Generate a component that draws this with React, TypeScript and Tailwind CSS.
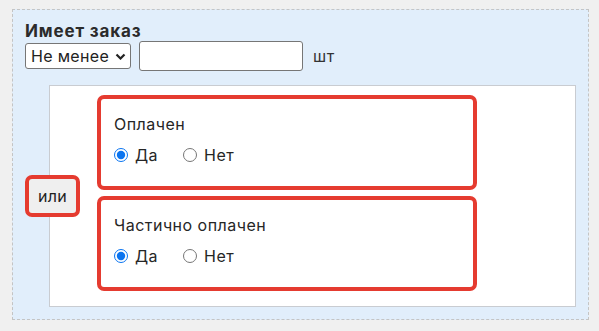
import { useState } from "react";

// Фильтр "Имеет заказ" с условиями оплаты
function OplataBlok({ nazvanie, imya }: { nazvanie: string; imya: string }) {
  const [znachenie, setZnachenie] = useState("da");
  return (
    <div className="w-[380px] rounded-[7px] border-4 border-[#e53b30] pl-[13px] pt-[15px] pb-[21px] text-[16px] leading-[20px] tracking-[0.03em] text-[#262626]">
      <div>{nazvanie}</div>
      <div className="mt-[11px] flex items-center">
        <label className="flex items-center">
          <input
            type="radio"
            name={imya}
            checked={znachenie === "da"}
            onChange={() => setZnachenie("da")}
            className="m-0 h-[14px] w-[14px] accent-[#0a74f0]"
          />
          <span className="ml-[7px]">Да</span>
        </label>
        <label className="ml-[25px] flex items-center">
          <input
            type="radio"
            name={imya}
            checked={znachenie === "net"}
            onChange={() => setZnachenie("net")}
            className="m-0 h-[14px] w-[14px] accent-[#0a74f0]"
          />
          <span className="ml-[7px]">Нет</span>
        </label>
      </div>
    </div>
  );
}

export default function App() {
  return (
    <div className="min-h-screen bg-[#f0f0f0] pt-[9px] pl-[12px] pr-[10px] pb-[11px] font-['Inter',sans-serif]">
      <div className="border border-dashed border-[#c4c4c4] bg-[#e1eefb] px-3 pt-[11px] pb-3">
        <div className="text-[17px] font-bold leading-[20px] tracking-[0.05em] text-[#2b2b2b]">Имеет заказ</div>
        <div className="flex items-center">
          <div className="relative">
            <select className="h-[26px] w-[106px] appearance-none rounded-[3px] border border-[#767676] bg-white pl-[5px] text-[16px] tracking-[0.02em] text-[#222]">
              <option>Не менее</option>
              <option>Не более</option>
            </select>
            <svg
              className="pointer-events-none absolute right-[5px] top-[10px]"
              width="11"
              height="7"
              viewBox="0 0 11 7"
            >
              <path d="M1.5 1.5 L5.5 5.5 L9.5 1.5" fill="none" stroke="#222" strokeWidth="2.2" />
            </svg>
          </div>
          <input
            type="text"
            className="ml-[8px] h-[30px] w-[164px] rounded-[3px] border border-[#767676] bg-white px-1"
          />
          <span className="ml-[10px] text-[16px] tracking-[0.04em] text-[#333]">шт</span>
        </div>
        <div className="relative ml-[24px] mt-[14px] border border-[#c9ccd1] bg-white pl-[47px] pt-[9px] pb-[15px]">
          <div className="absolute left-[-25px] top-1/2 flex h-[42px] w-[55px] -translate-y-1/2 items-center justify-center rounded-[7px] border-4 border-[#e53b30] bg-[#efefef] text-[16px] tracking-[0.02em] text-[#222]">
            или
          </div>
          <div className="flex flex-col gap-[6px]">
            <OplataBlok nazvanie="Оплачен" imya="oplachen" />
            <OplataBlok nazvanie="Частично оплачен" imya="chastichno" />
          </div>
        </div>
      </div>
    </div>
  );
}
